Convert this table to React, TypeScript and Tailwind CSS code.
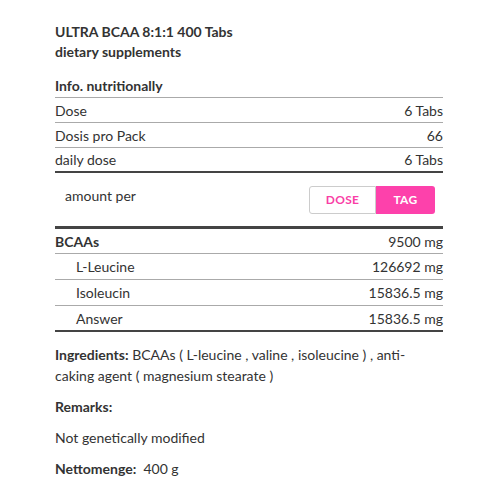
import React from 'react'

const rows = [
  { label: 'Dose', value: '6 Tabs' },
  { label: 'Dosis pro Pack', value: '66' },
  { label: 'daily dose', value: '6 Tabs' },
]

const amounts = [
  { label: 'L-Leucine', value: '126692 mg' },
  { label: 'Isoleucin', value: '15836.5 mg' },
  { label: 'Answer', value: '15836.5 mg' },
]

export default function App() {
  return (
    <div className="w-[500px] h-[500px] bg-white text-[#333] text-[14px] font-['Lato',sans-serif] pl-[55px] pr-[57px] pt-[22px]">
      <h1 className="font-bold leading-[20px]">
        ULTRA BCAA 8:1:1 400 Tabs
        <br />
        dietary supplements
      </h1>

      <h2 className="font-bold mt-[14px] leading-[20px] pb-[1px]">Info. nutritionally</h2>
      <div className="border-t border-[#aaa]">
        {rows.map((r, i) => (
          <div
            key={r.label}
            className={`flex justify-between h-[25px] items-center ${i === rows.length - 1 ? 'border-b-2 border-[#444]' : 'border-b border-[#aaa]'}`}
          >
            <span>{r.label}</span>
            <span>{r.value}</span>
          </div>
        ))}
      </div>

      <div className="flex justify-between pl-[10px] pr-[8px] pt-[13px] pb-[12px]">
        <span className="leading-[20px]">amount per</span>
        <div className="flex h-[28px] text-[12px] font-bold">
          <button className="w-[67px] border border-[#ccc] rounded-l-[3px] text-[#f93ea6] tracking-wide">DOSE</button>
          <button className="w-[59px] bg-[#fd41ab] text-white rounded-r-[3px] tracking-wide">TAG</button>
        </div>
      </div>

      <div className="border-t-[3px] border-[#444]">
        <div className="flex justify-between h-[25px] items-center border-b border-[#aaa]">
          <span className="font-bold">BCAAs</span>
          <span>9500 mg</span>
        </div>
        {amounts.map((r, i) => (
          <div
            key={r.label}
            className={`flex justify-between h-[26px] items-center pl-[21px] ${i === amounts.length - 1 ? 'border-b-2 border-[#444]' : 'border-b border-[#aaa]'}`}
          >
            <span>{r.label}</span>
            <span>{r.value}</span>
          </div>
        ))}
      </div>

      <p className="mt-[12px] leading-[21px]">
        <b>Ingredients:</b> BCAAs ( L-leucine , valine , isoleucine ) , anti-
        <br />
        caking agent ( magnesium stearate )
      </p>
      <p className="mt-[10px] font-bold leading-[21px]">Remarks:</p>
      <p className="mt-[10px] leading-[21px]">Not genetically modified</p>
      <p className="mt-[10px] leading-[21px]">
        <b>Nettomenge:</b>&nbsp; 400 g
      </p>
    </div>
  )
}
